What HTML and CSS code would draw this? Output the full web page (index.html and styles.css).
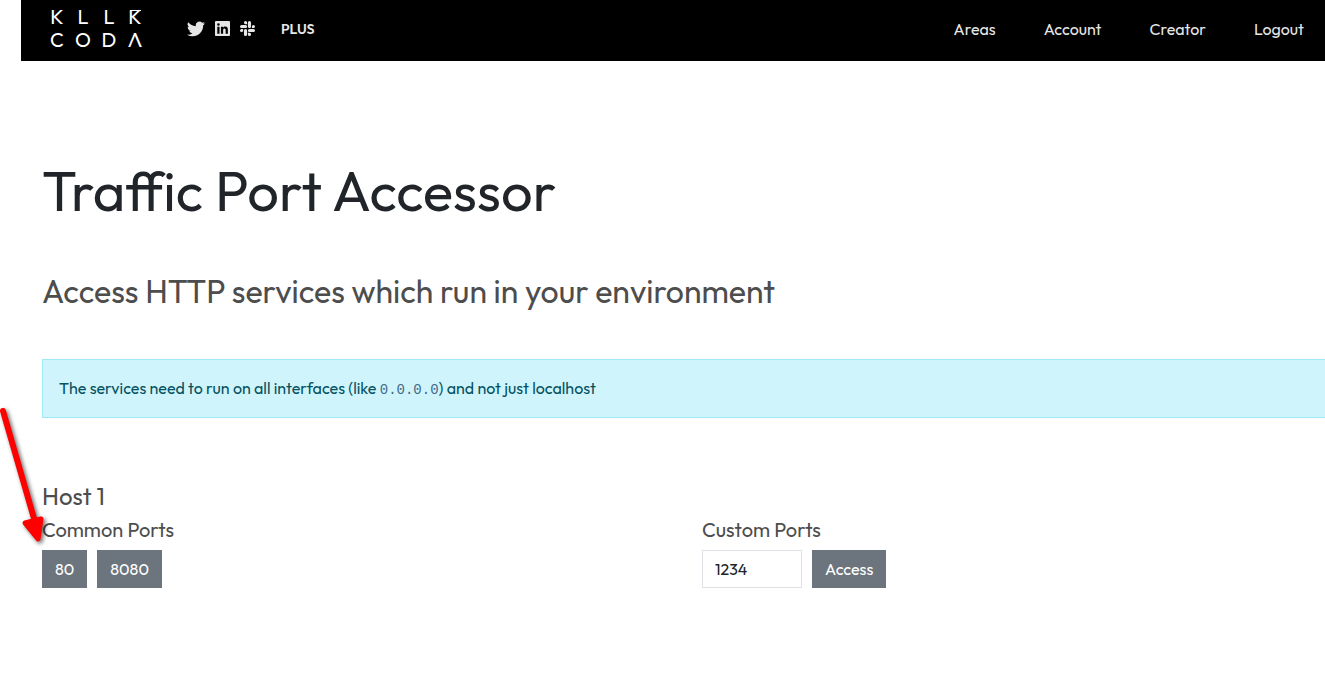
FILE: index.html
```html
<!DOCTYPE html>
<html lang="en">
<head>
<meta charset="utf-8">
<meta name="viewport" content="width=device-width, initial-scale=1">
<title>Traffic Port Accessor</title>
<link rel="stylesheet" href="styles.css">
</head>
<body class="page">
<header class="navbar">
  <a class="logo" href="#" aria-label="Killercoda">
    <span>K</span><span>L</span><span>L</span><span class="logo-barred">K</span>
    <span>C</span><span>O</span><span>D</span><span>Λ</span>
  </a>
  <div class="social">
    <a class="social-link" href="#" aria-label="Twitter">
      <svg class="icon twitter" viewBox="0 0 24 24"><path d="M23.95 4.57a10 10 0 0 1-2.82.77 4.96 4.96 0 0 0 2.16-2.72c-.95.55-2 .95-3.13 1.18a4.92 4.92 0 0 0-8.38 4.48C7.69 8.1 4.07 6.13 1.64 3.16a4.92 4.92 0 0 0 1.52 6.57 4.9 4.9 0 0 1-2.23-.61v.06a4.92 4.92 0 0 0 3.95 4.83 5 5 0 0 1-2.21.08 4.94 4.94 0 0 0 4.6 3.42A9.87 9.87 0 0 1 0 19.54a13.99 13.99 0 0 0 7.56 2.21c9.05 0 14-7.5 14-13.98 0-.21 0-.42-.02-.63a9.94 9.94 0 0 0 2.46-2.55z"/></svg>
    </a>
    <a class="social-link" href="#" aria-label="LinkedIn">
      <svg class="icon" viewBox="0 0 448 448"><path d="M416 0H32C14 0 0 15 0 32v384c0 18 14 32 32 32h384c18 0 32-14 32-32V32c0-17-14-32-32-32zM135 384H69V170h66v214zM102 141a38 38 0 1 1 0-77 38 38 0 0 1 0 77zm282 243h-66V280c0-25-1-57-35-57s-40 27-40 55v106h-66V170h64v29h1c9-17 30-35 63-35 67 0 79 44 79 102v118z"/></svg>
    </a>
    <a class="social-link" href="#" aria-label="Slack">
      <svg class="icon" viewBox="0 0 448 448"><path d="M94 283a47 47 0 1 1-47-47h47v47zm24 0a47 47 0 0 1 94 0v118a47 47 0 0 1-94 0V283zm47-189a47 47 0 1 1 47-47v47h-47zm0 24a47 47 0 0 1 0 94H47a47 47 0 0 1 0-94h118zm189 47a47 47 0 1 1 47 47h-47v-47zm-24 0a47 47 0 0 1-94 0V47a47 47 0 0 1 94 0v118zm-47 189a47 47 0 1 1-47 47v-47h47zm0-24a47 47 0 0 1 0-94h118a47 47 0 0 1 0 94H283z"/></svg>
    </a>
  </div>
  <a class="plus" href="#">PLUS</a>
  <nav class="menu">
    <a class="menu-link" href="#">Areas</a>
    <a class="menu-link" href="#">Account</a>
    <a class="menu-link" href="#">Creator</a>
    <a class="menu-link" href="#">Logout</a>
  </nav>
</header>
<main class="content">
  <h1 class="title">Traffic Port Accessor</h1>
  <h2 class="subtitle">Access HTTP services which run in your environment</h2>
  <div class="alert">The services need to run on all interfaces (like <code class="address">0.0.0.0</code>) and not just localhost</div>
  <section class="host">
    <h3 class="host-name">Host 1</h3>
    <div class="columns">
      <div>
        <h4 class="ports-title">Common Ports</h4>
        <div class="controls">
          <button class="button" type="button">80</button>
          <button class="button" type="button">8080</button>
        </div>
      </div>
      <form>
        <h4 class="ports-title"><label for="port">Custom Ports</label></h4>
        <div class="controls">
          <input class="port-input" id="port" type="text" value="1234">
          <button class="button" type="button">Access</button>
        </div>
      </form>
    </div>
  </section>
</main>
<svg class="arrow" viewBox="0 0 54 150" aria-hidden="true">
  <path d="M3 11 35 122" fill="none" stroke="#f00" stroke-width="6" stroke-linecap="round"/>
  <path d="M25 123 41 119 38 139Z" fill="#f00" stroke="#f00" stroke-width="5" stroke-linejoin="round"/>
</svg>
</body>
</html>
```
FILE: styles.css
```css
* {
  box-sizing: border-box;
}

.page {
  margin: 0;
  position: relative;
  overflow-x: hidden;
  background: #fff;
  color: #212529;
  font-family: Outfit, Lato, sans-serif;
  font-size: 16px;
  line-height: 24px;
}

.navbar {
  display: flex;
  align-items: center;
  min-height: 61px;
  margin-left: 21px;
  padding: 0 21px 4px 28px;
  background: #000;
}

.logo {
  display: grid;
  grid-template-columns: repeat(4, 16px);
  column-gap: 10px;
  justify-items: center;
  padding-bottom: 2px;
  color: #fff;
  font-size: 20px;
  font-weight: 400;
  line-height: 23px;
  text-decoration: none;
}

.logo-barred {
  position: relative;
}

.logo-barred::before {
  content: "";
  position: absolute;
  top: 5px;
  left: 2px;
  right: 1px;
  height: 1px;
  background: #fff;
}

.social {
  display: flex;
  align-items: center;
  gap: 10px;
  margin-left: 44px;
}

.social-link {
  display: flex;
}

.icon {
  width: 15px;
  height: 15px;
  fill: #e6e6e6;
}

.twitter {
  width: 18px;
  height: 18px;
}

.plus {
  margin-left: 26px;
  color: #e6e6e6;
  font-size: 14px;
  font-weight: 600;
  text-decoration: none;
}

.menu {
  display: flex;
  gap: 48px;
  margin-left: auto;
}

.menu-link {
  color: #e6e6e6;
  text-decoration: none;
}

.content {
  margin-right: -37px;
  padding: 96px 0 0 42px;
}

.title,
.subtitle,
.host-name,
.ports-title {
  margin: 0;
  font-weight: 400;
}

.title {
  font-size: 56px;
  line-height: 68px;
}

.subtitle {
  margin-top: 48px;
  color: #4d4d4d;
  font-size: 32px;
  line-height: 36px;
}

.alert {
  margin-top: 50px;
  padding: 16px 16px 15px;
  border: 1px solid #9eeaf9;
  background: #cff4fc;
  color: #055160;
}

.address {
  color: #456a88;
  font-family: "Liberation Mono", monospace;
  font-size: 14px;
}

.host {
  margin-top: 64px;
  color: #4d4d4d;
}

.host-name {
  font-size: 24px;
  line-height: 28px;
}

.columns {
  display: grid;
  grid-template-columns: 1fr 1fr;
  margin-top: 8px;
}

.ports-title {
  font-size: 20px;
  line-height: 24px;
}

.controls {
  display: flex;
  gap: 10px;
  margin-top: 8px;
}

.button,
.port-input {
  height: 38px;
  padding: 0 12px;
  border: 1px solid #6c757d;
  border-radius: 0;
  font: inherit;
}

.button {
  background: #6c757d;
  color: #fff;
}

.port-input {
  width: 100px;
  border-color: #dee2e6;
  background: #fff;
  color: #212529;
}

.arrow {
  position: absolute;
  top: 400px;
  left: 0;
  width: 54px;
  height: 150px;
  filter: drop-shadow(2px 2px 2px rgba(0, 0, 0, 0.6));
}
```
